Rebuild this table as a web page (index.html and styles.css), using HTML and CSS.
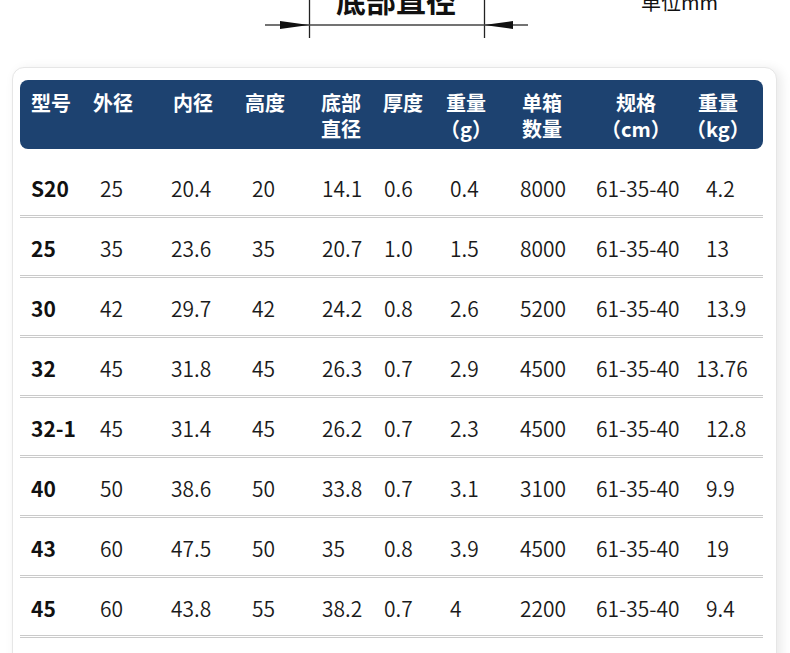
FILE: index.html
```html
<!DOCTYPE html>
<html lang="zh">
<head>
<meta charset="utf-8">
<link rel="stylesheet" href="styles.css">
</head>
<body>
<div class="diagram">
  <svg class="dim" width="790" height="67" viewBox="0 0 790 67">
    <text class="dim-label" x="396" y="12" text-anchor="middle">底部直径</text>
    <text class="unit" x="641" y="10">单位mm</text>
    <line x1="309.5" y1="0" x2="309.5" y2="38" stroke="#222" stroke-width="1.3"/>
    <line x1="484.5" y1="0" x2="484.5" y2="38" stroke="#222" stroke-width="1.3"/>
    <line x1="265" y1="25" x2="528" y2="25" stroke="#444" stroke-width="1.6"/>
    <polygon points="280,21 309,25 280,29" fill="#111"/>
    <polygon points="513,21 484,25 513,29" fill="#111"/>
  </svg>
</div>
<div class="card">
  <div class="head grid">
    <div class="hc h1">型号</div>
    <div class="hc h2">外径</div>
    <div class="hc h3">内径</div>
    <div class="hc h4">高度</div>
    <div class="hc h5">底部<br>直径</div>
    <div class="hc h6">厚度</div>
    <div class="hc h7">重量<br>（g）</div>
    <div class="hc h8">单箱<br>数量</div>
    <div class="hc h9">规格<br>（cm）</div>
    <div class="hc h10">重量<br>（kg）</div>
  </div>
  <div class="row grid first"><div class="model">S20</div><div>25</div><div>20.4</div><div>20</div><div>14.1</div><div>0.6</div><div>0.4</div><div>8000</div><div>61-35-40</div><div>4.2</div></div>
  <div class="row grid"><div class="model">25</div><div>35</div><div>23.6</div><div>35</div><div>20.7</div><div>1.0</div><div>1.5</div><div>8000</div><div>61-35-40</div><div>13</div></div>
  <div class="row grid"><div class="model">30</div><div>42</div><div>29.7</div><div>42</div><div>24.2</div><div>0.8</div><div>2.6</div><div>5200</div><div>61-35-40</div><div>13.9</div></div>
  <div class="row grid"><div class="model">32</div><div>45</div><div>31.8</div><div>45</div><div>26.3</div><div>0.7</div><div>2.9</div><div>4500</div><div>61-35-40</div><div class="nudge">13.76</div></div>
  <div class="row grid"><div class="model">32-1</div><div>45</div><div>31.4</div><div>45</div><div>26.2</div><div>0.7</div><div>2.3</div><div>4500</div><div>61-35-40</div><div>12.8</div></div>
  <div class="row grid"><div class="model">40</div><div>50</div><div>38.6</div><div>50</div><div>33.8</div><div>0.7</div><div>3.1</div><div>3100</div><div>61-35-40</div><div>9.9</div></div>
  <div class="row grid"><div class="model">43</div><div>60</div><div>47.5</div><div>50</div><div>35</div><div>0.8</div><div>3.9</div><div>4500</div><div>61-35-40</div><div>19</div></div>
  <div class="row grid"><div class="model">45</div><div>60</div><div>43.8</div><div>55</div><div>38.2</div><div>0.7</div><div>4</div><div>2200</div><div>61-35-40</div><div>9.4</div></div>
</div>
</body>
</html>
```
FILE: styles.css
```css
html, body {
  margin: 0;
  padding: 0;
  background: #fff;
  overflow: hidden;
}
body {
  width: 790px;
  height: 653px;
  font-family: "Noto Sans CJK SC", "Noto Sans", sans-serif;
  color: #1a1a1a;
}
.diagram {
  height: 67px;
}
.dim {
  display: block;
}
.dim-label {
  font-family: "Noto Sans CJK SC", sans-serif;
  font-size: 30px;
  font-weight: 700;
  fill: #111;
}
.unit {
  font-family: "Noto Sans CJK SC", sans-serif;
  font-size: 20px;
  fill: #111;
}
.card {
  margin-left: 12px;
  width: 765px;
  box-sizing: border-box;
  height: 640px;
  border: 1px solid #e6e6e6;
  border-radius: 12px;
  padding: 12px 13px 20px 7px;
  background: #fff;
  box-shadow: 4px 2px 12px rgba(0, 0, 0, 0.09);
}
.grid {
  display: grid;
  grid-template-columns: 69px 71px 81px 70px 62px 66px 70px 76px 110px 57px;
  padding-left: 11px;
}
.head {
  background: #1d4270;
  border-radius: 8px;
  padding-top: 10px;
  padding-bottom: 7px;
  color: #fff;
  font-size: 20px;
  font-weight: 700;
  line-height: 26px;
}
.hc {
  justify-self: start;
  width: max-content;
  text-align: center;
}
.h2 { margin-left: -7px; }
.h3 { margin-left: 2px; }
.h4 { margin-left: -7px; }
.h5 { margin-left: -1px; }
.h6 { margin-left: -1px; }
.h7 { margin-left: -10px; }
.h8 { margin-left: 2px; }
.h9 { margin-left: 5px; }
.h10 { margin-left: -20px; }
.row {
  font-size: 21px;
  font-weight: 350;
  line-height: 30px;
  padding-top: 15px;
  padding-bottom: 12px;
  border-bottom: 3px double #cacaca;
  white-space: nowrap;
}
.row.first {
  margin-top: 9px;
}
.model {
  font-weight: 700;
  color: #111;
}
.nudge {
  margin-left: -10px;
}
```
